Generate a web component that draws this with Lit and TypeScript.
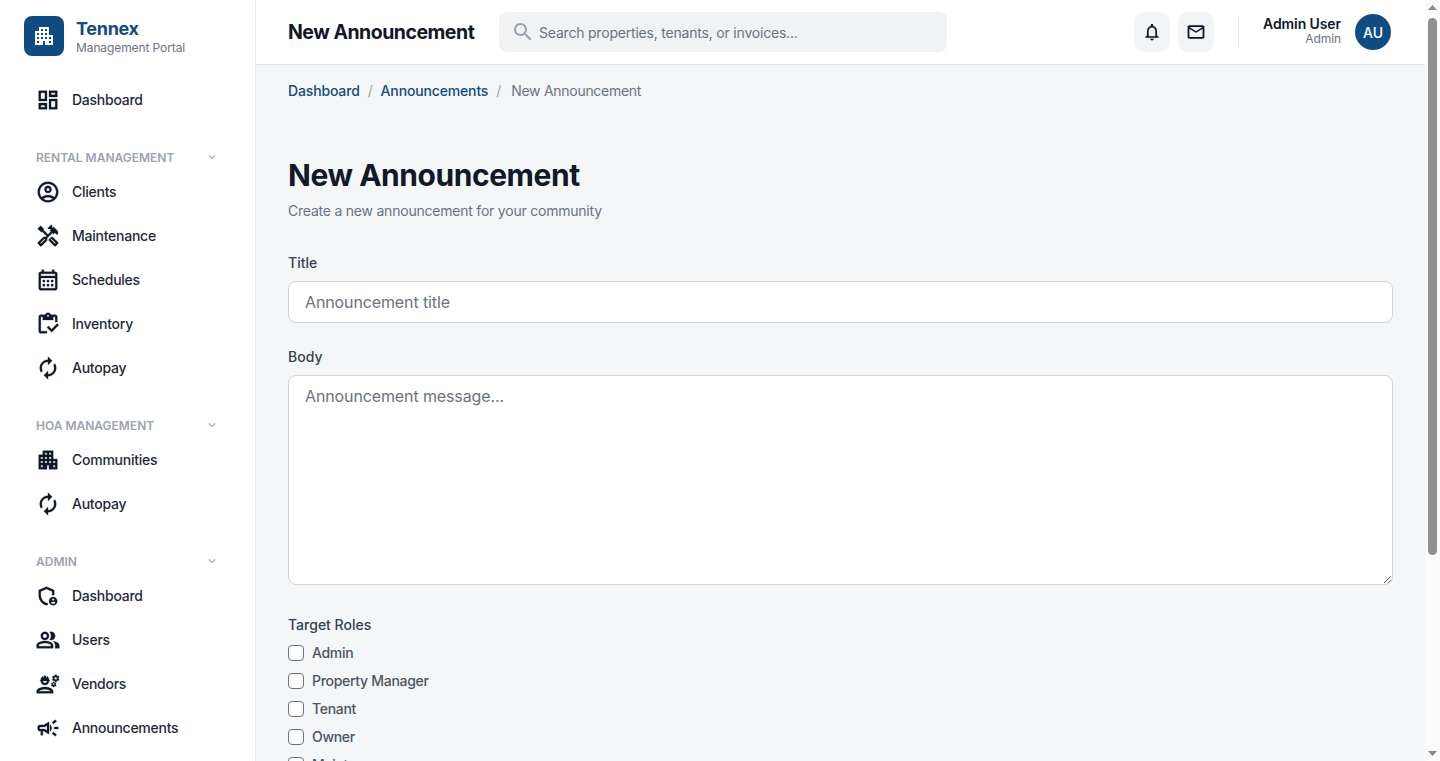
import { LitElement, html, css, svg } from "lit";
import { customElement } from "lit/decorators.js";

const I: Record<string, string> = {
  dashboard: "M19 5v2h-4V5h4M9 5v6H5V5h4m10 8v6h-4v-6h4M9 17v2H5v-2h4M21 3h-8v6h8V3zM11 3H3v10h8V3zm10 8h-8v10h8V11zm-10 4H3v6h8v-6z",
  clients: "M12 2C6.48 2 2 6.48 2 12s4.48 10 10 10 10-4.48 10-10S17.52 2 12 2zM7.35 18.5C8.66 17.56 10.26 17 12 17s3.34.56 4.65 1.5c-1.31.94-2.91 1.5-4.65 1.5s-3.34-.56-4.65-1.5zm10.79-1.38C16.45 15.8 14.32 15 12 15s-4.45.8-6.14 2.12C4.7 15.73 4 13.95 4 12c0-4.42 3.58-8 8-8s8 3.58 8 8c0 1.95-.7 3.73-1.86 5.12zM12 6c-1.93 0-3.5 1.57-3.5 3.5S10.07 13 12 13s3.5-1.57 3.5-3.5S13.93 6 12 6zm0 5c-.83 0-1.5-.67-1.5-1.5S11.17 8 12 8s1.5.67 1.5 1.5S12.83 11 12 11z",
  construction: "m21.67 18.17-5.3-5.3h-.99l-2.54 2.54v.99l5.3 5.3c.39.39 1.02.39 1.41 0l2.12-2.12c.39-.38.39-1.02 0-1.41zm-2.83 1.42-4.24-4.24.71-.71 4.24 4.24-.71.71zM17.34 10.19l1.41-1.41 2.12 2.12c1.17-1.17 1.17-3.07 0-4.24l-3.54-3.54-1.41 1.41V1.71l-.7-.71-3.54 3.54.71.71h2.83l-1.41 1.41 1.06 1.06-2.89 2.89-4.13-4.13V5.06L4.83 2.04 2 4.87 5.03 7.9h1.41l4.13 4.13-.85.85H7.6l-5.3 5.3c-.39.39-.39 1.02 0 1.41l2.12 2.12c.39.39 1.02.39 1.41 0l5.3-5.3v-2.12l5.15-5.15 1.06 1.05zm-7.98 5.15-4.24 4.24-.71-.71 4.24-4.24.71.71z",
  calendar: "M19 4h-1V2h-2v2H8V2H6v2H5c-1.1 0-2 .9-2 2v14c0 1.1.9 2 2 2h14c1.1 0 2-.9 2-2V6c0-1.1-.9-2-2-2zm0 16H5V10h14v10zm0-12H5V6h14v2zM9 14H7v-2h2v2zm4 0h-2v-2h2v2zm4 0h-2v-2h2v2zm-8 4H7v-2h2v2zm4 0h-2v-2h2v2zm4 0h-2v-2h2v2z",
  inventory: "M5 5h2v3h10V5h2v5h2V5c0-1.1-.9-2-2-2h-4.18C14.4 1.84 13.3 1 12 1s-2.4.84-2.82 2H5c-1.1 0-2 .9-2 2v14c0 1.1.9 2 2 2h6v-2H5V5zm7-2c.55 0 1 .45 1 1s-.45 1-1 1-1-.45-1-1 .45-1 1-1zM21 11.5 15.51 17l-3.01-3-1.5 1.5 4.51 4.5 6.99-7z",
  autorenew: "M12 6v3l4-4-4-4v3c-4.42 0-8 3.58-8 8 0 1.57.46 3.03 1.24 4.26L6.7 14.8c-.45-.83-.7-1.79-.7-2.8 0-3.31 2.69-6 6-6zm6.76 1.74L17.3 9.2c.44.84.7 1.79.7 2.8 0 3.31-2.69 6-6 6v-3l-4 4 4 4v-3c4.42 0 8-3.58 8-8 0-1.57-.46-3.03-1.24-4.26z",
  apartment: "M17 11V3H7v4H3v14h8v-4h2v4h8V11h-4zM7 19H5v-2h2v2zm0-4H5v-2h2v2zm0-4H5V9h2v2zm4 4H9v-2h2v2zm0-4H9V9h2v2zm0-4H9V5h2v2zm4 8h-2v-2h2v2zm0-4h-2V9h2v2zm0-4h-2V5h2v2zm4 12h-2v-2h2v2zm0-4h-2v-2h2v2z",
  admin: "M10.5 3 3 6.27v4.91c0 4.54 3.2 8.79 7.5 9.82.55-.13 1.08-.32 1.6-.55-.42-.6-.73-1.26-.91-1.98l-.69.29C7.04 17.6 5 14.4 5 11.18V7.58l5.5-2.4 5.5 2.4v3.6c.64-.12 1.34-.2 2-.09V6.27zM17 13c-2.21 0-4 1.79-4 4s1.79 4 4 4 4-1.79 4-4-1.79-4-4-4zm0 1.38c.62 0 1.12.51 1.12 1.12s-.51 1.12-1.12 1.12-1.12-.51-1.12-1.12.5-1.12 1.12-1.12zm0 5.37c-.93 0-1.74-.46-2.24-1.17.05-.72 1.51-1.08 2.24-1.08s2.19.36 2.24 1.08c-.5.71-1.31 1.17-2.24 1.17z",
  group: "M16.67 13.13C18.04 14.06 19 15.32 19 17v3h4v-3c0-2.18-3.57-3.47-6.33-3.87zM15 12c2.21 0 4-1.79 4-4s-1.79-4-4-4c-.47 0-.91.1-1.33.24C14.5 5.27 15 6.58 15 8s-.5 2.73-1.33 3.76c.42.14.86.24 1.33.24zM9 12c2.21 0 4-1.79 4-4s-1.79-4-4-4-4 1.79-4 4 1.79 4 4 4zm0-6c1.1 0 2 .9 2 2s-.9 2-2 2-2-.9-2-2 .9-2 2-2zM9 13c-2.67 0-8 1.34-8 4v3h16v-3c0-2.66-5.33-4-8-4zm6 5H3v-.99C3.2 16.29 6.3 15 9 15s5.8 1.29 6 2z",
  engineering: "M9 15c-2.67 0-8 1.34-8 4v2h16v-2c0-2.66-5.33-4-8-4zm-6 4c.22-.72 3.31-2 6-2 2.7 0 5.8 1.29 6 2H3zM4.74 9H5c0 2.21 1.79 4 4 4s4-1.79 4-4h.26c.27 0 .49-.22.49-.49v-.02c0-.27-.22-.49-.49-.49H13c0-1.48-.81-2.75-2-3.45v.95c0 .28-.22.5-.5.5s-.5-.22-.5-.5V4.14C9.68 4.06 9.35 4 9 4s-.68.06-1 .14V5.5c0 .28-.22.5-.5.5S7 5.78 7 5.5v-.95C5.81 5.25 5 6.52 5 8h-.26c-.27 0-.49.22-.49.49v.03c0 .26.22.48.49.48zM11 9c0 1.1-.9 2-2 2s-2-.9-2-2h4zM21.98 6.23l.93-.83-.75-1.3-1.19.39c-.14-.11-.3-.2-.47-.27L20.25 3h-1.5l-.25 1.22c-.17.07-.33.16-.48.27l-1.18-.39-.75 1.3.93.83c-.02.17-.02.35 0 .52l-.93.85.75 1.3 1.2-.38c.13.1.28.18.43.25l.28 1.23h1.5l.27-1.22c.16-.07.3-.15.44-.25l1.19.38.75-1.3-.93-.85c.03-.19.02-.36.01-.53zM19.5 7.75c-.69 0-1.25-.56-1.25-1.25s.56-1.25 1.25-1.25 1.25.56 1.25 1.25-.56 1.25-1.25 1.25zM19.4 10.79l-.85.28c-.1-.08-.21-.14-.33-.19L18.04 10h-1.07l-.18.87c-.12.05-.24.12-.34.19l-.84-.28-.54.93.66.59c-.01.13-.01.25 0 .37l-.66.61.54.93.86-.27c.1.07.2.13.31.18l.2.88h1.07l.19-.87c.11-.05.22-.11.32-.18l.85.27.54-.93-.66-.61c.01-.13.01-.25 0-.37l.66-.59-.55-.93zM17.5 12.87c-.49 0-.89-.4-.89-.89s.4-.89.89-.89.89.4.89.89-.4.89-.89.89z",
  campaign: "M18 11v2h4v-2h-4zm-2 6.61c.96.71 2.21 1.65 3.2 2.39.4-.53.8-1.07 1.2-1.6-.99-.74-2.24-1.68-3.2-2.4-.4.54-.8 1.08-1.2 1.61zM20.4 5.6c-.4-.53-.8-1.07-1.2-1.6-.99.74-2.24 1.68-3.2 2.4.4.53.8 1.07 1.2 1.6.96-.72 2.21-1.65 3.2-2.4zM4 9c-1.1 0-2 .9-2 2v2c0 1.1.9 2 2 2h1v4h2v-4h1l5 3V6L8 9H4zm5.03 1.71L11 9.53v4.94l-1.97-1.18-.48-.29H4v-2h4.55l.48-.29zM15.5 12c0-1.33-.58-2.53-1.5-3.35v6.69c.92-.81 1.5-2.01 1.5-3.34z",
  bell: "M12 22c1.1 0 2-.9 2-2h-4c0 1.1.9 2 2 2zm6-6v-5c0-3.07-1.63-5.64-4.5-6.32V4c0-.83-.67-1.5-1.5-1.5s-1.5.67-1.5 1.5v.68C7.64 5.36 6 7.92 6 11v5l-2 2v1h16v-1l-2-2zm-2 1H8v-6c0-2.48 1.51-4.5 4-4.5s4 2.02 4 4.5v6z",
  mail: "M22 6c0-1.1-.9-2-2-2H4c-1.1 0-2 .9-2 2v12c0 1.1.9 2 2 2h16c1.1 0 2-.9 2-2V6zm-2 0l-8 5-8-5h16zm0 12H4V8l8 5 8-5v10z",
  search: "M15.5 14h-.79l-.28-.27C15.41 12.59 16 11.11 16 9.5 16 5.91 13.09 3 9.5 3S3 5.91 3 9.5 5.91 16 9.5 16c1.61 0 3.09-.59 4.23-1.57l.27.28v.79l5 4.99L20.49 19l-4.99-5zm-6 0C7.01 14 5 11.99 5 9.5S7.01 5 9.5 5 14 7.01 14 9.5 11.99 14 9.5 14z",
  chevron: "M16.59 8.59 12 13.17 7.41 8.59 6 10l6 6 6-6z",
};

const icon = (n: string, cls = "") =>
  html`<svg class="ic ${cls}" viewBox="0 0 24 24" fill="currentColor">${svg`<path d=${I[n]} fill-rule="evenodd"></path>`}</svg>`;

const groups = [
  { title: "RENTAL MANAGEMENT", items: [["clients", "Clients"], ["construction", "Maintenance"], ["calendar", "Schedules"], ["inventory", "Inventory"], ["autorenew", "Autopay"]] },
  { title: "HOA MANAGEMENT", items: [["apartment", "Communities"], ["autorenew", "Autopay"]] },
  { title: "ADMIN", items: [["admin", "Dashboard"], ["group", "Users"], ["engineering", "Vendors"], ["campaign", "Announcements"]] },
];

const roles = ["Admin", "Property Manager", "Tenant", "Owner", "Maintenance"];

@customElement("app-root")
export class AppRoot extends LitElement {
  static styles = css`
    :host { display: block; font-family: Inter, "Noto Sans", sans-serif; color: #111827; }
    * { box-sizing: border-box; }
    .ic { width: 24px; height: 24px; flex: none; display: block; }
    .shell { display: flex; height: 761px; overflow: hidden; background: #f5f6f8; }
    .side { width: 256px; flex: none; overflow: hidden; background: #fff; border-right: 1px solid #e5e7eb; padding: 16px 24px; }
    .brand { display: flex; align-items: center; gap: 12px; height: 40px; margin-bottom: 22px; }
    .logo { width: 40px; height: 40px; border-radius: 8px; background: #0f4c81; color: #fff; display: flex; align-items: center; justify-content: center; }
    .brand-name { font-size: 18px; font-weight: 700; line-height: 24px; color: #0f4c81; letter-spacing: -0.3px; margin-top: -2px; }
    .brand-sub { font-size: 12px; line-height: 13px; color: #6b7280; letter-spacing: -0.1px; }
    .item { display: flex; align-items: center; gap: 12px; height: 44px; padding: 0 12px; font-size: 14px; font-weight: 450; letter-spacing: -0.25px; color: #1f2937; }
    .item .ic { color: #111827; stroke: currentColor; stroke-width: 0.3; transform: scale(1.03); }
    .item span { margin-top: -1px; }
    .sec { display: flex; align-items: center; justify-content: space-between; height: 22px; padding: 0 12px; margin: 24px 0 2px; font-size: 12px; font-weight: 600; color: #9ca3af; }
    .sec .ic { width: 14px; height: 14px; }
    .right { flex: 1; min-width: 0; }
    .top { height: 65px; display: flex; align-items: center; background: #fff; border-bottom: 1px solid #e5e7eb; padding: 0 34px 0 32px; }
    .top h2 { margin: 0; font-size: 19.5px; font-weight: 700; width: 211px; letter-spacing: -0.5px; white-space: nowrap; }
    .search { width: 448px; height: 40px; border-radius: 8px; background: #f1f2f4; display: flex; align-items: center; padding-left: 12px; gap: 4px; color: #9ca3af; font-size: 14px; letter-spacing: -0.2px; }
    .search span { color: #6b7280; }
    .tools { margin-left: auto; display: flex; align-items: center; gap: 8px; }
    .tool { width: 36px; height: 40px; border-radius: 10px; background: #f3f4f6; display: flex; align-items: center; justify-content: center; color: #111827; }
    .tool .ic { width: 20px; height: 20px; stroke: currentColor; stroke-width: 0.15; }
    .vr { width: 1px; height: 32px; background: #e5e7eb; margin: 0 16px; }
    .user { text-align: right; margin-top: -4px; }
    .uname { font-size: 14px; font-weight: 600; line-height: 18px; letter-spacing: -0.1px; }
    .urole { font-size: 12px; line-height: 12px; color: #6b7280; letter-spacing: -0.1px; }
    .avatar { width: 36px; height: 36px; margin-left: 6px; border-radius: 50%; background: #0f4c81; color: #fff; font-size: 14px; font-weight: 500; display: flex; align-items: center; justify-content: center; }
    .main { padding: 16px 32px; }
    .crumbs { display: flex; gap: 8px; font-size: 14px; line-height: 20px; font-weight: 450; color: #6b7280; height: 20px; letter-spacing: -0.15px; }
    .crumbs a { color: #0f4c81; }
    .crumbs i { font-style: normal; color: #9ca3af; font-weight: 400; }
    .crumbs span { letter-spacing: -0.28px; font-weight: 400; margin-left: 2px; }
    h1 { margin: 54px 0 0; font-size: 30px; line-height: 40px; font-weight: 700; letter-spacing: -0.45px; }
    .sub { font-size: 14px; line-height: 20px; color: #6b7280; margin-top: 6px; letter-spacing: -0.22px; }
    .lab { font-size: 14px; font-weight: 500; line-height: 20px; color: #374151; margin-bottom: 8px; }
    .f1 { margin-top: 32px; }
    .f2 { margin-top: 24px; }
    .f3 { margin-top: 30px; }
    input.text, textarea { display: block; width: 100%; border: 1px solid #d1d5db; border-radius: 8px; background: #fff; padding: 9px 16px; font: 400 16px/22px Inter, sans-serif; letter-spacing: -0.12px; color: #111827; outline: none; margin: 0; }
    input.text { height: 42px; }
    textarea { height: 210px; }
    ::placeholder { color: #6b7280; opacity: 1; }
    .checks { display: flex; flex-direction: column; gap: 8px; margin-top: -1px; }
    .check { display: flex; align-items: center; gap: 8px; height: 20px; font-size: 14px; color: #4b5563; font-weight: 450; letter-spacing: -0.3px; }
    .box { width: 16px; height: 16px; margin-top: 2px; border: 1px solid #6b7280; border-radius: 4px; background: #fff; flex: none; }
    .bar { width: 15px; flex: none; background: #fafafa; display: flex; flex-direction: column; align-items: center; }
    .arrow { width: 15px; height: 17px; flex: none; display: block; fill: #8a8a8a; }
    .thumb { width: 9px; height: 537px; margin-top: 1px; border-radius: 5px; background: #8f8f8f; }
    .gap { flex: 1; }
  `;

  render() {
    return html`<div class="shell">
      <aside class="side">
        <div class="brand">
          <div class="logo">${icon("apartment")}</div>
          <div><div class="brand-name">Tennex</div><div class="brand-sub">Management Portal</div></div>
        </div>
        <div class="item">${icon("dashboard")}<span>Dashboard</span></div>
        ${groups.map((g) => html`
          <div class="sec">${g.title}${icon("chevron")}</div>
          ${g.items.map(([i, t]) => html`<div class="item">${icon(i)}<span>${t}</span></div>`)}
        `)}
      </aside>
      <div class="right">
        <header class="top">
          <h2>New Announcement</h2>
          <div class="search">${icon("search")}<span>Search properties, tenants, or invoices...</span></div>
          <div class="tools">
            <div class="tool">${icon("bell")}</div>
            <div class="tool">${icon("mail")}</div>
            <div class="vr"></div>
            <div class="user"><div class="uname">Admin User</div><div class="urole">Admin</div></div>
            <div class="avatar">AU</div>
          </div>
        </header>
        <main class="main">
          <nav class="crumbs"><a>Dashboard</a><i>/</i><a>Announcements</a><i>/</i><span>New Announcement</span></nav>
          <h1>New Announcement</h1>
          <div class="sub">Create a new announcement for your community</div>
          <div class="f1"><div class="lab">Title</div><input class="text" placeholder="Announcement title" /></div>
          <div class="f2"><div class="lab">Body</div><textarea placeholder="Announcement message..."></textarea></div>
          <div class="f3"><div class="lab">Target Roles</div>
            <div class="checks">${roles.map((r) => html`<div class="check"><span class="box"></span>${r}</div>`)}</div>
          </div>
        </main>
      </div>
      <div class="bar">
        <svg class="arrow" viewBox="0 0 15 17"><path d="M7.5 5 12 10H3z"></path></svg>
        <div class="thumb"></div>
        <div class="gap"></div>
        <svg class="arrow" viewBox="0 0 15 17"><path d="M3 7h9l-4.5 5z"></path></svg>
      </div>
    </div>`;
  }
}
